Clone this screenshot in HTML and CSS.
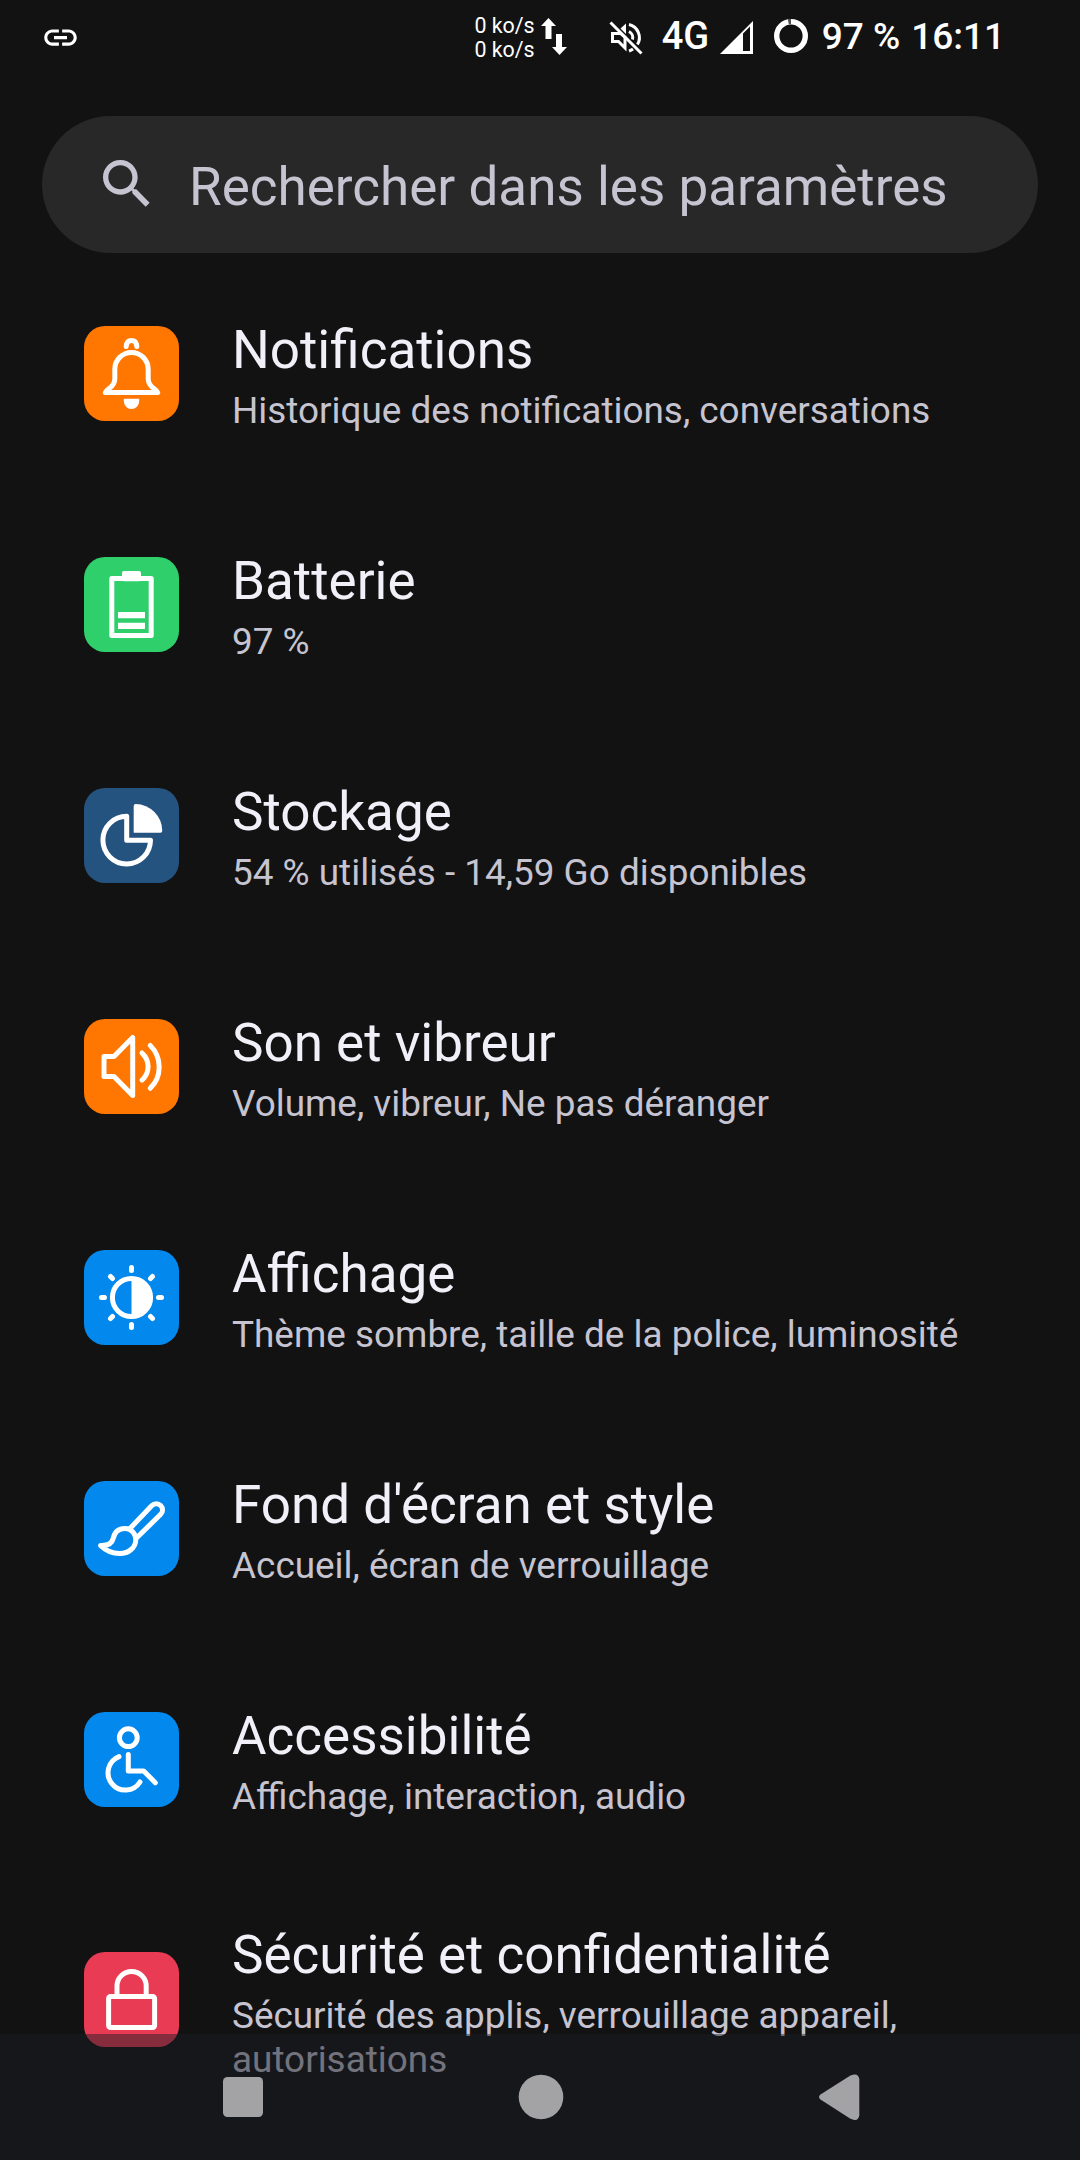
FILE: index.html
```
<!DOCTYPE html>
<html lang="fr">
    <head>
        <meta charset="utf-8">
        <title>Paramètres</title>
        <link rel="stylesheet" href="styles.css">
    </head>
    <body>
        <header class="status-bar">
            <svg class="icon-link" viewBox="0 0 24 24">
                <path d="M3.9 12c0-1.71 1.39-3.1 3.1-3.1h4V7H7c-2.76 0-5 2.24-5 5s2.24 5 5 5h4v-1.9H7c-1.71 0-3.1-1.39-3.1-3.1zM8 13h8v-2H8v2zm9-6h-4v1.9h4c1.71 0 3.1 1.39 3.1 3.1s-1.39 3.1-3.1 3.1h-4V17h4c2.76 0 5-2.24 5-5s-2.24-5-5-5z"/>
            </svg>
            <div class="network-speed">
                <p>0 ko/s</p>
                <p>0 ko/s</p>
            </div>
            <svg class="icon-traffic" viewBox="0 0 26 37">
                <path d="M7.5 0L15 8h-4.500v13h-6V8H0zM15 16h6v13h5l-7.500 8L11 29h4z"/>
            </svg>
            <svg class="icon-mute" viewBox="0 0 34 34">
                <path class="line" d="M3.500 12.500v8h6l6.500 6.500v-10.500L11.500 12.500z"/>
                <path class="line" d="M20 3.500a13.500 13.500 0 0 1 8.500 20M20 10.500a7 7 0 0 1 3.500 8M20 30a14 14 0 0 0 4-2"/>
                <path d="M11.500 7.500L17 2.500V13z"/>
                <path class="line" d="M1.500 1.500l31 31"/>
            </svg>
            <span class="network-type">4G</span>
            <svg class="icon-signal" viewBox="0 0 33 33">
                <path d="M33 0v33H0zM23 12.500V30h7V5.500z" fill-rule="evenodd"/>
            </svg>
            <svg class="icon-battery" viewBox="0 0 34 34">
                <circle cx="17" cy="17" r="14.300"/>
                <path class="used" d="M14.300 2.900q1.300-.3 2.700-.3"/>
            </svg>
            <span class="battery-level">97 %</span>
            <span class="clock">16:11</span>
        </header>

        <div class="search">
            <svg class="icon-search" viewBox="0 0 24 24">
                <path d="M15.5 14h-.79l-.28-.27C15.41 12.590 16 11.110 16 9.500 16 5.910 13.090 3 9.500 3S3 5.910 3 9.500 5.910 16 9.500 16c1.610 0 3.090-.59 4.230-1.570l.27.28v.79l5 4.990L20.490 19l-4.990-5zm-6 0C7.010 14 5 11.990 5 9.500S7.010 5 9.500 5 14 7.010 14 9.500 11.990 14 9.500 14z"/>
            </svg>
            <span class="search-label">Rechercher dans les paramètres</span>
        </div>

        <main class="settings">
            <div class="setting">
                <svg class="tile orange" viewBox="0 0 95 95">
                    <path d="M47.500 26.500a16.700 16.700 0 0 1 16.700 16.700V53c0 9 8.500 9.500 9.500 13.500H21.300c1-4 9.500-4.500 9.500-13.500v-9.800a16.700 16.700 0 0 1 16.700-16.700z"/>
                    <path d="M42.200 20.500c.3-4 2.300-6 5.300-6s5 2 5.300 6"/>
                    <path class="fill" d="M39.800 72.700h15.400v2.300a7.700 8 0 0 1-15.400 0z"/>
                </svg>
                <div class="text">
                    <h2>Notifications</h2>
                    <p>Historique des notifications, conversations</p>
                </div>
            </div>

            <div class="setting">
                <svg class="tile green" viewBox="0 0 95 95">
                    <rect x="27.800" y="21.500" width="39.400" height="57"/>
                    <rect class="fill" x="38" y="14" width="19" height="10.300" rx="2"/>
                    <path class="fill" d="M34 55h27v6.300H34zM34 65.700h27V72H34z"/>
                </svg>
                <div class="text">
                    <h2>Batterie</h2>
                    <p>97 %</p>
                </div>
            </div>

            <div class="setting">
                <svg class="tile navy" viewBox="0 0 95 95">
                    <path d="M42.700 28.300v23.900h23.800a23.800 23.800 0 1 1-23.800-23.900z"/>
                    <path class="fill" d="M51.700 16a27 27 0 0 1 26.600 26.700q0 2-2 2H49.700V18q0-2 2-2z"/>
                </svg>
                <div class="text">
                    <h2>Stockage</h2>
                    <p>54 % utilisés - 14,59 Go disponibles</p>
                </div>
            </div>

            <div class="setting">
                <svg class="tile orange" viewBox="0 0 95 95">
                    <path d="M20 37.500h10l18.700-19v58L30 57.500H20z"/>
                    <path d="M58 34a18 18 0 0 1 0 27M66.200 26.500a30 30 0 0 1 0 42.800"/>
                </svg>
                <div class="text">
                    <h2>Son et vibreur</h2>
                    <p>Volume, vibreur, Ne pas déranger</p>
                </div>
            </div>

            <div class="setting">
                <svg class="tile blue" viewBox="0 0 95 95">
                    <circle cx="47.500" cy="47.500" r="19.100"/>
                    <path class="fill" d="M47.500 28a19.500 19.500 0 0 1 0 39z"/>
                    <path d="M47.500 17.500v3M47.500 74.500v3M17.500 47.500h3M74.500 47.500h3M26.500 26.500l2 2M66.500 66.500l2 2M68.500 26.500l-2 2M28.500 66.500l-2 2"/>
                </svg>
                <div class="text">
                    <h2>Affichage</h2>
                    <p>Thème sombre, taille de la police, luminosité</p>
                </div>
            </div>

            <div class="setting">
                <svg class="tile blue" viewBox="0 0 95 95">
                    <path d="M45.500 48l22.400-23.500a6.200 6.200 0 0 1 8.800 8.800L53.500 56"/>
                    <path d="M16.500 64.500C24 65 28 62 29.200 57.500 30.500 51 34.500 47.500 41 47.500c6 0 10.800 5 10.800 11 0 8-7 14-16 14-8.300 0-14.300-3-19.300-8z"/>
                </svg>
                <div class="text">
                    <h2>Fond d'écran et style</h2>
                    <p>Accueil, écran de verrouillage</p>
                </div>
            </div>

            <div class="setting">
                <svg class="tile blue" viewBox="0 0 95 95">
                    <circle cx="44.300" cy="25.700" r="8.900"/>
                    <path d="M44.300 42.500v16.400h15.400l11.600 11.800M35 44.700A17.300 17.300 0 1 0 56 70"/>
                </svg>
                <div class="text">
                    <h2>Accessibilité</h2>
                    <p>Affichage, interaction, audio</p>
                </div>
            </div>

            <div class="setting setting-tall">
                <svg class="tile red" viewBox="0 0 95 95">
                    <rect x="24.600" y="44.500" width="46" height="31" rx="2"/>
                    <path d="M33 44.500V34a14.600 14.600 0 0 1 29.200 0v10.500"/>
                </svg>
                <div class="text">
                    <h2>Sécurité et confidentialité</h2>
                    <p>Sécurité des applis, verrouillage appareil, autorisations</p>
                </div>
            </div>
        </main>

        <nav class="nav-bar">
            <svg viewBox="0 0 46 46"><rect x="3" y="3" width="40" height="40" rx="4.500"/></svg>
            <svg viewBox="0 0 46 46"><circle cx="23" cy="23" r="22.300"/></svg>
            <svg viewBox="0 0 46 46"><path d="M4.500 20.500L34 1.800q8.300-4 9.300 3.400v36q-1 7.400-9.300 3.400L4.500 25.500q-3-2.500 0-5z"/></svg>
        </nav>
    </body>
</html>
```
FILE: styles.css
```
* {
    box-sizing: border-box;
    margin: 0;
    padding: 0;
}

body {
    height: 2160px;
    overflow: hidden;
    background: #121212;
    color: #f1eff7;
    font-family: Roboto, sans-serif;
}

svg {
    flex: none;
}

/* Status bar */
.status-bar {
    display: flex;
    align-items: center;
    height: 72px;
    padding-left: 41px;
    color: #fff;
    fill: #fff;
    font-size: 37px;
    font-weight: 500;
    white-space: nowrap;
}

.icon-link {
    width: 39px;
    height: 39px;
    margin-top: 2px;
}

.network-speed {
    margin-left: auto;
    margin-top: 4px;
    font-size: 21.4px;
    font-weight: 400;
    line-height: 24px;
}

.icon-traffic {
    width: 26px;
    height: 37px;
    margin-left: 6px;
}

.icon-mute {
    width: 34px;
    height: 34px;
    margin-left: 42px;
    margin-top: 3px;
}

.icon-mute .line {
    fill: none;
    stroke: #fff;
    stroke-width: 3;
}

.network-type {
    margin-left: 19px;
    font-size: 38px;
}

.icon-signal {
    width: 33px;
    height: 33px;
    margin-left: 11px;
    margin-top: 2px;
}

.icon-battery {
    width: 34px;
    height: 34px;
    margin-left: 21px;
}

.icon-battery circle {
    fill: none;
    stroke: #fff;
    stroke-width: 5.4;
}

.icon-battery .used {
    fill: none;
    stroke: #555;
    stroke-width: 5.4;
}

.battery-level {
    margin-left: 13.5px;
}

.clock {
    margin-left: 11px;
    margin-right: 75px;
}

/* Search */
.search {
    display: flex;
    align-items: center;
    gap: 30px;
    height: 137px;
    margin: 44px 42px 0;
    padding-left: 53px;
    border-radius: 69px;
    background: #282828;
    color: #c6c4d0;
    fill: #c6c4d0;
    font-size: 53px;
}

.icon-search {
    width: 64px;
    height: 64px;
    margin-bottom: 1px;
}

.search-label {
    padding-top: 4px;
}

/* Settings list */
.settings {
    padding: 5px 84px 0;
}

.setting {
    display: flex;
    align-items: center;
    gap: 53px;
    height: 231px;
}

.setting-tall {
    height: 249px;
}

.tile {
    width: 95px;
    height: 95px;
    border-radius: 21px;
    fill: none;
    stroke: #fff;
    stroke-width: 5;
    stroke-linecap: round;
    stroke-linejoin: round;
}

.tile .fill {
    fill: #fff;
    stroke: none;
}

.orange {
    background: #ff7600;
}

.green {
    background: #2fd06c;
}

.navy {
    background: #25537f;
}

.blue {
    background: #0389ee;
}

.red {
    background: #ea3b54;
}

.text {
    padding-top: 4px;
}

.setting-tall .text {
    padding-top: 6px;
}

.text h2 {
    font-size: 53px;
    font-weight: 400;
    line-height: 63px;
}

.text p {
    margin-top: 7px;
    color: #c6c4d0;
    font-size: 36.9px;
    line-height: 43.5px;
}

/* Navigation bar, over the end of the list */
.nav-bar {
    position: absolute;
    left: 0;
    right: 0;
    bottom: 0;
    display: flex;
    justify-content: center;
    align-items: center;
    gap: 252px;
    height: 126px;
    padding-left: 1px;
    background: rgba(26, 28, 37, 0.483);
    fill: #a3a3a5;
}

.nav-bar svg {
    width: 46px;
    height: 46px;
}
```
